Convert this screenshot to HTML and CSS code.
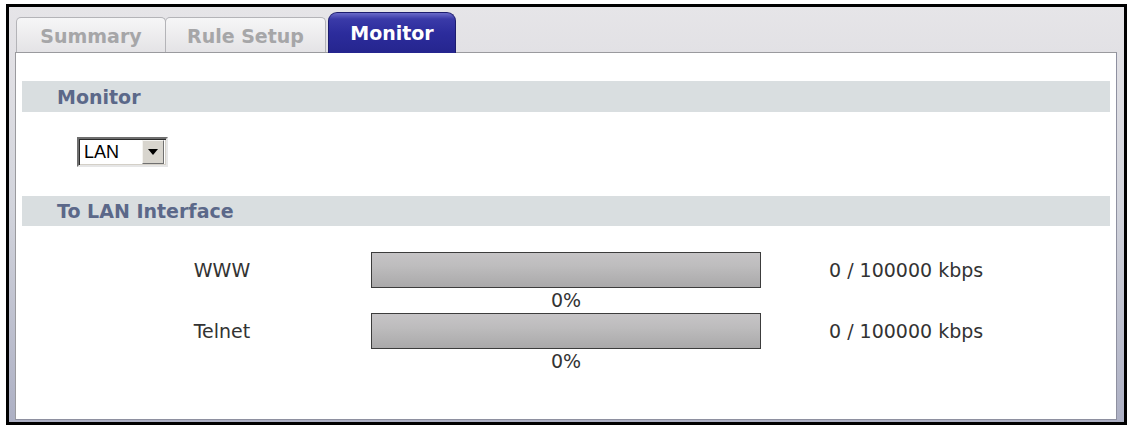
FILE: index.html
```html
<!DOCTYPE html>
<html>
<head>
<meta charset="utf-8">
<title>Monitor</title>
<link rel="stylesheet" href="styles.css">
</head>
<body>
<div class="frame">
  <div class="tabbar">
    <div class="tab">Summary</div>
    <div class="tab tab-second">Rule Setup</div>
    <div class="tab tab-active">Monitor</div>
  </div>
  <div class="panel">
    <div class="band band-first">Monitor</div>
    <div class="select-row">
      <div class="select">
        <span class="select-text">LAN</span>
        <span class="select-btn">
          <svg width="10" height="6" viewBox="0 0 10 6"><path d="M0 0H10L5 6Z" fill="#000"/></svg>
        </span>
      </div>
    </div>
    <div class="band band-second">To LAN Interface</div>
    <div class="rows">
      <div class="row">
        <div class="label">WWW</div>
        <div class="meter">
          <div class="bar"></div>
          <div class="pct">0%</div>
        </div>
        <div class="value">0 / 100000 kbps</div>
      </div>
      <div class="row">
        <div class="label">Telnet</div>
        <div class="meter">
          <div class="bar"></div>
          <div class="pct">0%</div>
        </div>
        <div class="value">0 / 100000 kbps</div>
      </div>
    </div>
  </div>
</div>
</body>
</html>
```

FILE: styles.css
```css
html, body {
  margin: 0;
  padding: 0;
  background: #ffffff;
}

body {
  font-family: "DejaVu Sans", Verdana, sans-serif;
  font-size: 19px;
  color: #2e2e2e;
}

.frame {
  box-sizing: border-box;
  margin: 4px 0 0 6px;
  width: 1121px;
  height: 421px;
  border: 3px solid #000000;
  padding: 0 7px 2px 6px;
  display: flex;
  flex-direction: column;
  background: linear-gradient(to bottom, #e6e5e8 0px, #e2e1e5 45px, #d2d4dc 200px, #adb0c4 100%);
}

.tabbar {
  height: 45px;
  flex: none;
  display: flex;
  align-items: flex-end;
  padding-left: 1px;
  position: relative;
  z-index: 2;
}

.tab {
  box-sizing: border-box;
  width: 150px;
  height: 35px;
  border: 1px solid #b4b4b8;
  border-bottom: none;
  border-radius: 5px 5px 0 0;
  background: linear-gradient(to bottom, #f6f6f7, #e4e3e6);
  color: #a6a6a8;
  font-weight: bold;
  font-size: 19px;
  display: flex;
  align-items: center;
  justify-content: center;
  padding-top: 1px;
}

.tab-second {
  width: 161px;
  margin-left: -1px;
}

.tab-active {
  width: 128px;
  height: 41px;
  margin-left: 2px;
  margin-bottom: -1px;
  border: 1px solid #1c1c6e;
  border-bottom: none;
  border-radius: 9px 9px 0 0;
  background: linear-gradient(to bottom, #6a6ac8 0px, #3a3aa8 6px, #2c2c9c 50%, #25258e 100%);
  color: #ffffff;
  padding-top: 0;
}

.panel {
  flex: 1;
  box-sizing: border-box;
  background: #ffffff;
  border: 1px solid #9a9a9e;
  border-right-color: #8e90a0;
  border-bottom-color: #8e90a0;
  padding: 0 6px;
}

.band {
  height: 30px;
  background: #d9dee0;
  color: #5b6889;
  font-weight: bold;
  font-size: 19px;
  line-height: 30px;
  padding-left: 35px;
}

.band-first {
  margin-top: 28px;
  height: 31px;
  line-height: 32px;
}

.band-second {
  margin-top: 29px;
  line-height: 31px;
}

.select-row {
  margin-top: 25px;
  padding-left: 55px;
}

.select {
  box-sizing: border-box;
  width: 91px;
  height: 30px;
  border: 2px solid;
  border-color: #6e6e6e #e6e6e6 #e6e6e6 #6e6e6e;
  box-shadow: inset 1px 1px 0 #2c2c2c, inset -1px -1px 0 #d4d0c8;
  background: #ffffff;
  display: flex;
  align-items: center;
  justify-content: space-between;
  padding: 1px 2px 1px 5px;
}

.select-text {
  font-family: "Liberation Sans", Arial, sans-serif;
  font-size: 18px;
  color: #000000;
}

.select-btn {
  box-sizing: border-box;
  width: 22px;
  height: 24px;
  background: #d8d5ce;
  border: 1px solid;
  border-color: #f4f3f0 #707070 #707070 #f4f3f0;
  display: flex;
  align-items: center;
  justify-content: center;
}

.select-btn svg {
  display: block;
}

.rows {
  margin-top: 26px;
}

.row {
  display: grid;
  grid-template-columns: 349px 390px auto;
  align-items: start;
}

.label {
  height: 36px;
  line-height: 36px;
  padding-left: 51px;
  text-align: center;
  color: #333333;
}

.bar {
  box-sizing: border-box;
  height: 36px;
  border: 1px solid #3c3c3c;
  background: linear-gradient(to bottom, #c6c4c6 0%, #bdbcbd 40%, #aaa9aa 100%);
}

.pct {
  height: 25px;
  line-height: 25px;
  text-align: center;
  color: #333333;
}

.value {
  height: 36px;
  line-height: 36px;
  padding-left: 68px;
  color: #333333;
}
```
